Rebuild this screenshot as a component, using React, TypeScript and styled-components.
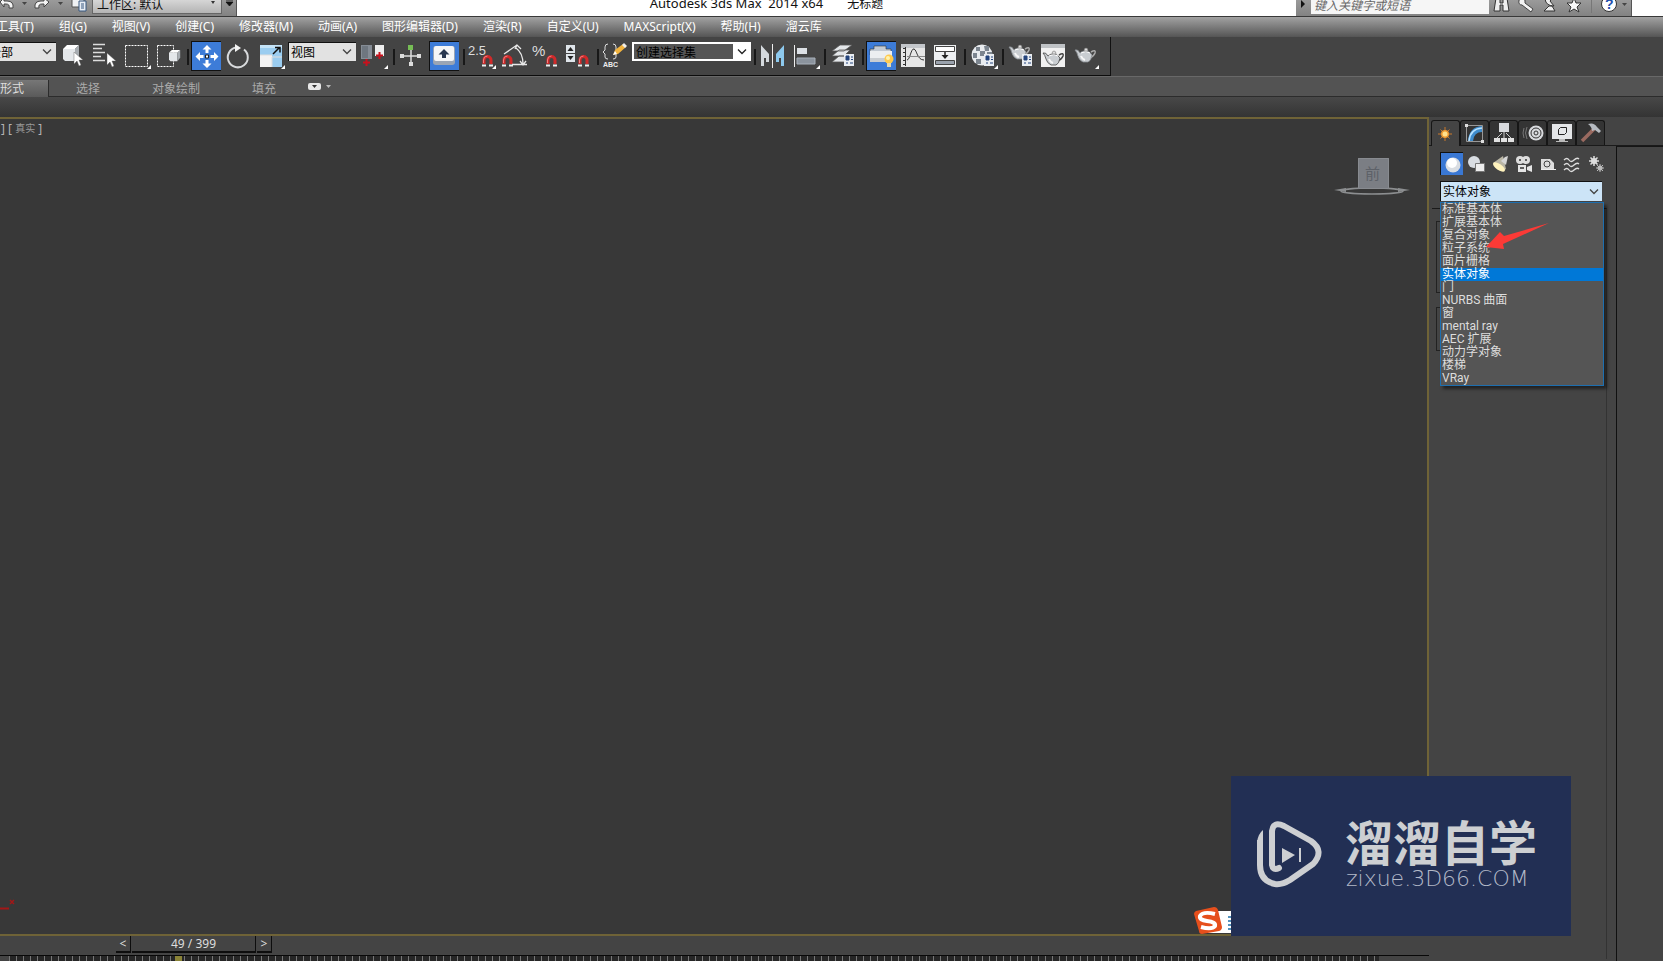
import React from "react";
import styled, { createGlobalStyle, css } from "styled-components";

const Global = createGlobalStyle`
  * { box-sizing: border-box; }
  body { margin: 0; background: #444; overflow: hidden; }
  body, button, input, select {
    font-family: "Noto Sans", "Noto Sans CJK SC", sans-serif;
    font-size: 12px;
  }
  button, select, input { margin: 0; padding: 0; border: 0; border-radius: 0; outline: 0; }
  svg { display: block; flex: none; }
`;

const Page = styled.div`
  position: relative;
  display: flex;
  flex-direction: column;
  height: 100vh;
  overflow: hidden;
  background: #444;
`;

/* Title bar */
const TitleBar = styled.header`
  display: flex;
  justify-content: space-between;
  height: 16px;
  overflow: hidden;
  background: #fff;
  color: #111;
`;
const QuickAccess = styled.div`
  display: flex;
  flex: none;
  width: 237px;
  height: 16px;
  background: linear-gradient(#9a9a9a, #828282);
  border-right: 1px solid #555;
`;
const InfoCenter = styled(QuickAccess)`
  width: 336px;
  margin-right: 31px;
`;
const Title = styled.h1`
  display: flex;
  flex: 1;
  justify-content: center;
  gap: 24px;
  margin: -5px 0 0;
  font-size: 12px;
  font-weight: 400;
  line-height: 17px;
  white-space: pre;
`;
const ProductName = styled.span`
  font-size: 13px;
`;
const PlainButton = styled.button`
  flex: none;
  background: none;
`;
const WorkspaceSelect = styled.select`
  appearance: none;
  width: 130px;
  height: 19px;
  margin: -5px 3px 0 2px;
  padding-left: 4px;
  border: 1px solid #666;
  background: linear-gradient(#e0e0e0, #b4b4b4);
  color: #111;
`;
const SearchInput = styled.input`
  width: 178px;
  height: 18px;
  margin-top: -4px;
  padding-left: 3px;
  background: #f6f6f6;
  font-style: italic;
  &::placeholder { color: #666; opacity: 1; }
`;
const SelectWrap = styled.label`
  position: relative;
  display: flex;
  flex: none;
`;
const Chevron = styled.svg`
  position: absolute;
  right: 3px;
  top: 6px;
  pointer-events: none;
`;
const SmallArrow = styled(Chevron)`
  right: 9px;
  top: 1px;
`;

/* Menu */
const MenuBar = styled.nav`
  display: flex;
  gap: 25px;
  height: 21px;
  padding-bottom: 1px;
  border-top: 1px solid #383838;
  background: linear-gradient(#a2a2a2, #555);
  white-space: nowrap;
`;
const MenuItem = styled.button`
  background: none;
  color: #fff;
  line-height: 18px;
  &:first-child { margin-left: -4px; }
`;

/* Main toolbar */
const Toolbar = styled.div`
  display: flex;
  width: 1111px;
  height: 39px;
  padding-top: 3px;
  border-right: 1px solid #111;
  border-bottom: 1px solid #0c0c0c;
  background: #444;
`;
const Tool = styled.button<{ $active?: boolean }>`
  flex: none;
  width: 32px;
  height: 32px;
  background: none;
  ${(p) =>
    p.$active &&
    css`
      background: linear-gradient(#3d7cd8, #3d7cd8) 2px 2px / 29px 28px no-repeat,
        linear-gradient(#111, #111) 1px 1px / 30px 30px no-repeat;
    `}
`;
const Separator = styled.span`
  flex: none;
  width: 2px;
  height: 16px;
  margin: 9px 1px 0 3px;
  background: #181818;
`;
const ToolSelect = styled.select<{ $width: number; $dark?: boolean }>`
  appearance: none;
  width: ${(p) => p.$width}px;
  height: 19px;
  padding-left: 2px;
  border-top: 1px solid #111;
  border-left: 1px solid #111;
  background: #e2e2e2;
  color: #000;
  ${(p) =>
    p.$dark &&
    css`
      border: 2px solid #fff;
      border-right-width: 18px;
      background: #555;
    `}
`;
const ToolField = styled(SelectWrap)<{ $cut?: boolean; $spaced?: boolean }>`
  height: 20px;
  margin: 2px ${(p) => (p.$spaced ? 2 : 0)}px 0;
  margin-left: ${(p) => (p.$cut ? -14 : p.$spaced ? 2 : 0)}px;
`;

/* Ribbon */
const RibbonTabs = styled.div`
  display: flex;
  height: 21px;
  padding-top: 3px;
  border-top: 1px solid #686868;
  border-bottom: 1px solid #2c2c2c;
  background: #535353;
`;
const RibbonTab = styled.button<{ $width: number; $active?: boolean }>`
  width: ${(p) => p.$width}px;
  height: 17px;
  background: ${(p) => (p.$active ? "linear-gradient(#777, #5a5a5a)" : "none")};
  border-right: ${(p) => (p.$active ? "1px solid #2c2c2c" : "0")};
  color: ${(p) => (p.$active ? "#ddd" : "#aaa")};
  line-height: 15px;
  text-align: ${(p) => (p.$active ? "left" : "center")};
`;
const RibbonPanel = styled.div`
  height: 20px;
  background: linear-gradient(#484848, #343434);
`;

/* Workspace */
const Workspace = styled.main`
  display: flex;
  flex: 1;
  min-height: 0;
`;
const Stage = styled.section`
  display: flex;
  flex: 1;
  flex-direction: column;
  min-width: 0;
`;
const Viewport = styled.div`
  display: flex;
  flex: 1;
  flex-direction: column;
  justify-content: space-between;
  border: 2px solid #6f6337;
  border-left: 0;
  background: #383838;
`;
const ViewportTop = styled.div`
  display: flex;
  justify-content: space-between;
`;
const ViewportLabel = styled.span`
  padding: 1px;
  color: #b4b4b4;
  font-size: 12px;
  line-height: 16px;
  white-space: pre;
  small { font-size: 10px; color: #999; vertical-align: 1px; }
`;
const CubeSlot = styled.div`
  padding: 38px 17px 0 0;
`;
const AxisSlot = styled.div`
  padding-bottom: 21px;
`;
const TimeRow = styled.div`
  display: flex;
  gap: 1px;
  height: 19px;
  padding: 0 0 2px 116px;
`;
const TimeButton = styled.button<{ $width: number }>`
  width: ${(p) => p.$width}px;
  border-right: 1px solid #0d0d0d;
  border-bottom: 2px solid #0d0d0d;
  background: #444;
  color: #ddd;
  line-height: 15px;
`;
const Track = styled.div`
  display: flex;
  height: 6px;
  padding-left: 9px;
  border-top: 1px solid #080808;
`;
const Ticks = styled.div`
  flex: 1;
  padding-left: 166px;
  margin-right: 50px;
  background: repeating-linear-gradient(90deg, #777 0 1px, #262626 1px 7px);
`;
const FrameMark = styled.div`
  width: 7px;
  height: 5px;
  background: #8b8438;
`;

/* Command panel */
const CommandPanel = styled.aside`
  display: flex;
  flex: none;
  flex-direction: column;
  width: 234px;
  padding-top: 3px;
  background: #444;
`;
const PanelTabs = styled.div`
  display: flex;
  height: 26px;
  padding-left: 2px;
  border-bottom: 1px solid #1a1a1a;
`;
const PanelTab = styled.button<{ $active?: boolean }>`
  width: 29px;
  height: ${(p) => (p.$active ? 26 : 25)}px;
  border: 1px solid #161616;
  border-bottom: 0;
  border-radius: 3px 3px 0 0;
  background: ${(p) => (p.$active ? "#444" : "#343434")};
`;
const PanelBody = styled.div`
  display: flex;
  flex: 1;
  padding-left: 3px;
`;
const CreatePane = styled.div`
  flex: 1;
  padding-top: 6px;
`;
const Dock = styled.div`
  width: 47px;
  border-top: 1px solid #161616;
  border-left: 1px solid #101010;
`;
const Categories = styled.div`
  display: flex;
  gap: 1px;
  padding-left: 8px;
`;
const Category = styled.button<{ $active?: boolean }>`
  width: 23px;
  height: 23px;
  background: ${(p) => (p.$active ? "#3a78d4" : "none")};
  border-top: 1px solid ${(p) => (p.$active ? "#111" : "transparent")};
  border-left: 1px solid ${(p) => (p.$active ? "#111" : "transparent")};
`;
const Combo = styled.div`
  position: relative;
  width: 164px;
  margin: 6px 0 0 8px;
`;
const ComboHead = styled.button`
  display: flex;
  align-items: center;
  justify-content: space-between;
  width: 162px;
  height: 20px;
  padding: 0 2px 0 2px;
  border-top: 1px solid #111;
  border-left: 1px solid #111;
  background: #cce4f7;
  color: #000;
  line-height: 18px;
`;
const ComboList = styled.ul`
  position: absolute;
  top: 21px;
  left: 0;
  z-index: 2;
  width: 164px;
  margin: 0;
  padding: 0;
  border: 1px solid #1d6fb0;
  background: #555;
  box-shadow: 3px 3px 3px rgba(0, 0, 0, 0.5);
  font-family: Roboto, "Noto Sans CJK SC", sans-serif;
  list-style: none;
`;
const ComboOption = styled.li<{ $selected?: boolean }>`
  height: 13px;
  padding-left: 1px;
  background: ${(p) => (p.$selected ? "#0078d7" : "none")};
  color: ${(p) => (p.$selected ? "#fff" : "#ddd")};
  line-height: 13px;
  white-space: nowrap;
`;
const Rollouts = styled.div`
  display: flex;
  flex-direction: column;
  gap: 14px;
  margin: 7px 9px 0 0;
  height: calc(100% - 58px);
  border-top: 1px solid #1a1a1a;
  border-right: 1px solid #333;
  padding: 12px 0 0 4px;
`;
const Rollout = styled.div<{ $height: number }>`
  height: ${(p) => p.$height}px;
  margin-right: 4px;
  border: 1px solid #222;
`;
const Pointer = styled.svg`
  position: absolute;
  top: 42px;
  left: 45px;
  z-index: 3;
  pointer-events: none;
`;

/* Overlays */
const Watermark = styled.div`
  position: absolute;
  right: 92px;
  bottom: 25px;
  display: flex;
  gap: 22px;
  width: 340px;
  height: 160px;
  padding: 38px 0 0 26px;
  background: #222f54;
  color: #cdcfd2;
`;
const Brand = styled.div`
  font-family: "Noto Sans CJK SC", sans-serif;
  font-size: 48px;
  font-weight: 700;
  line-height: 52px;
  white-space: nowrap;
`;
const Site = styled.div`
  padding-left: 1px;
  color: #b4bac9;
  font-family: "DejaVu Sans", sans-serif;
  font-size: 22px;
  font-weight: 200;
  line-height: 26px;
`;
const InputMethod = styled.div`
  position: absolute;
  right: 432px;
  bottom: 26px;
`;

type IconProps = { children: React.ReactNode; w?: number; h?: number };
const Icon = ({ children, w = 32, h = 32 }: IconProps) => (
  <svg width={w} height={h} viewBox={`0 0 ${w} ${h}`} fill="none" aria-hidden="true">
    {children}
  </svg>
);
const Corner = ({ x = 27 }: { x?: number }) => <path d={`M${x + 4} 25v4h-4z`} fill="#fff" />;
const Cursor = ({ x, y }: { x: number; y: number }) => (
  <path d={`M${x} ${y}v12l3-3 2 5 2-1-2-5h4z`} fill="#fff" stroke="#555" strokeWidth=".4" />
);
const Cube = ({ x, y, s }: { x: number; y: number; s: number }) => (
  <g transform={`translate(${x} ${y}) scale(${s})`}>
    <path d="M0 4 4 0h12l-4 4z" fill="#fff" />
    <path d="M0 4h12v12H2L0 14z" fill="#e4e7ea" />
    <path d="M12 4l4-4v11l-4 5z" fill="#a8adb2" />
  </g>
);
const Magnet = ({ x }: { x: number }) => (
  <g fill="none">
    <path d={`M${x + 2} 24v-4a3.5 3.5 0 0 1 7 0v4`} stroke="#d02a2a" strokeWidth="3" />
    <path d={`M${x + 1.5} 23v-3a4 4 0 0 1 4-4`} stroke="#f08080" />
    <path d={`M${x} 25.500h4M${x + 7} 25.500h4`} stroke="#eee" strokeWidth="2" />
  </g>
);
const Doc = ({ x, y }: { x: number; y: number }) => (
  <g transform={`translate(${x} ${y})`}>
    <path d="M0 0h10v12H0z" fill="#e9edf2" />
    <path d="M2 2h3v4H2z" fill="#24457c" stroke="#24457c" />
    <path d="M7 3h2M7 5.500h2M2 9h2M6 9h3" stroke="#24457c" />
  </g>
);
const Teapot = ({ x, y, dark }: { x: number; y: number; dark?: boolean }) => (
  <g transform={`translate(${x} ${y})`}>
    <path d="M16 4q5-3 4 1-1 3-5 5" stroke={dark ? "#444" : "#aaa"} strokeWidth="1.500" />
    <path d="M0 2q3-1 5 3 2-2 5-2 5 0 7 4-1 6-4 7H8Q4 12 3 8 2 4 0 2z" fill="#c9cdd1" stroke={dark ? "#444" : "#8b9095"} strokeWidth=".8" />
    <path d="M6 5q5-3 9 0" stroke="#fff" />
    <path d="M9 3q0-3 2-3t2 3z" fill="#ddd" stroke="#777" strokeWidth=".6" />
    <path d="M6 8q1 3 4 4" stroke="#f7f7f7" strokeWidth="2" />
  </g>
);

const icons: Record<string, React.ReactNode> = {
  object: <><Cube x={7} y={5} s={1} /><Cursor x={18} y={12} /></>,
  byName: <><path d="M5 4.500h12M5 8.500h9M5 12.500h12M5 16.500h8M5 20.500h12" stroke="#ddd" strokeWidth="1.500" /><Cursor x={19} y={13} /></>,
  region: <><path d="M5.500 5.500h22v21h-22z" stroke="#fff" strokeDasharray="2 1" /><Corner /></>,
  crossing: <><path d="M5.500 5.500h16v21h-16z" stroke="#fff" strokeDasharray="2 1" /><Cube x={17} y={10} s={0.7} /></>,
  move: <><path d="M17 5l4.500 4.500h-3V13h-3V9.500h-3zM17 28l4.500-4.500h-3V20h-3v3.500h-3zM5.500 16.500L10 12v3h3.500v3H10v3zM28.500 16.500L24 12v3h-3.500v3H24v3z" fill="#fff" /><path d="M15.500 15h3v3h-3z" fill="#fff" stroke="#222" /></>,
  rotate: <><path d="M14 7.500a10 10 0 1 0 8 2" stroke="#d8dadc" strokeWidth="2" /><path d="M13 4l6 4-6 4z" fill="#f4f4f4" /></>,
  scale: <><path d="M6 5h22v22H6z" fill="#9bcdf0" /><path d="M6 5h22v3H6z" fill="#c4e3f8" /><path d="M6 15h12v12H6z" fill="#f3f3f3" /><path d="M18 17h10M18 17v10M6 15h12" stroke="#ddd" /><path d="M19 14l6-6M21 7.500h5v5" stroke="#111" strokeWidth="1.500" /><Corner /></>,
  pivot: <><path d="M3 5h11v14H3z" fill="#858c95" /><path d="M4 6h6v12H4z" fill="#6e767f" /><path d="M17 5h9v11h-9z" fill="#eee" /><path d="M8.500 19v7M5 22.500h7M21.500 12v7M18 15.500h7" stroke="#c9101c" strokeWidth="2" /><Corner x={26} /></>,
  manipulate: <><path d="M15 8v15M7 16h16" stroke="#ddd" strokeWidth="1.500" /><path d="M12 5h5v5h-5z" fill="#76bd55" /><path d="M4 14h4v4H4zM21 14h4v4h-4zM13 22h4v4h-4z" fill="#ddd" /></>,
  keyboard: <><rect x="5" y="6" width="22" height="19" rx="3" fill="#9aa5b4" /><rect x="6" y="6" width="20" height="15" rx="2" fill="#f5f6f7" /><path d="M16 9l5.500 5.500H18V18h-4v-3.500h-3.500z" fill="#27364e" /></>,
  snap: <><text x="2" y="15" fill="#ddd" fontSize="13" fontFamily="Liberation Sans">2.5</text><Magnet x={16} /><Corner x={26} /></>,
  angle: <><Magnet x={4} /><path d="M6 14L19 5M14 24.500h15M18 8q7 5 7 16M17 9l2-4 4 4M22 21l3 4 3-4" stroke="#e8e8e8" strokeWidth="1.300" /></>,
  percent: <><text x="2" y="16" fill="#ddd" fontSize="15" fontFamily="Liberation Sans">%</text><Magnet x={16} /></>,
  spinner: <><path d="M4 5h9v8H4zM4 14h9v8H4z" fill="#dfe5ea" /><path d="M5.500 11h6l-3-4zM5.500 16h6l-3 4z" fill="#222" /><Magnet x={16} /></>,
  sets: <><path d="M8 4q-3 0-3 3v3l-2 2 2 2v3q0 2 3 2M13 4q3 0 3 3v3l2 2-2 2v3q0 2-3 2" stroke="#ddd" /><text x="3" y="27" fill="#eee" fontSize="7" fontWeight="700" fontFamily="Liberation Sans">ABC</text><path d="M13 15l2-5 8-6 3 3-8 7z" fill="#f3b43e" /><path d="M22 5l2-2 3 3-2 2z" fill="#eee" /><path d="M13 15l2-4 2 3z" fill="#fff" /></>,
  mirror: <><path d="M4 5l8 9v8H9v-4H7v8H4z" fill="#d5dade" /><path d="M15.500 4v24" stroke="#eee" /><path d="M27 5l-8 9v8h3v-4h2v8h3z" fill="#8dc9ee" /></>,
  align: <><path d="M5.500 5v22" stroke="#eee" /><path d="M8 8h10v6H8z" fill="#dce0e5" /><path d="M8 18h18v6H8z" fill="#8b939d" stroke="#a8b0ba" /><Corner /></>,
  layers: <><path d="M5 22l7-6h11l-6 6zM5 16l7-6h11l-6 6zM5 11l8-6h12l-8 6z" fill="#e4e7ea" stroke="#555" strokeWidth=".8" /><Doc x={17} y={14} /></>,
  ribbon: <><path d="M9 9V6h12v3h5v6H5V9z" fill="#c3cad3" stroke="#333" strokeWidth=".6" /><path d="M5 11h22v11H5z" fill="#eceef1" /><path d="M5 18h22v4H5z" fill="#c9cdd2" /><circle cx="24" cy="19" r="4.500" fill="#ffc94d" /><circle cx="23" cy="18" r="2" fill="#fff2b0" /><path d="M22 23h4v4h-4z" fill="#e5d9b0" /></>,
  curve: <><path d="M4 4h24v23H4z" fill="#e6e6e6" /><path d="M4 4h24v4H4z" fill="#c3c6ca" /><path d="M8.500 7v19M6 8.500h3M6 12.500h3M6 16.500h3M6 20.500h3M6 24.500h3" stroke="#333" /><path d="M10 20c3 0 4-12 7-11s3 11 10 11" stroke="#333" /><path d="M10 16.500h18" stroke="#888" /></>,
  schematic: <><path d="M5 5h22v22H5z" fill="#eef0f2" /><path d="M6.500 6.500h19v5h-19zM6.500 20.500h19v4h-19z" fill="#fff" stroke="#444" /><path d="M7 21h18v3H7z" fill="#9aa2ad" /><path d="M16 12v4" stroke="#222" strokeWidth="1.500" /><path d="M12.500 15h7L16 19z" fill="#222" /></>,
  material: <><circle cx="15" cy="15" r="10.500" fill="#e9ecef" /><path d="M9 7h4v4H9zM17 6h5v5h-4zM13 11h5v5h-5zM6 13h4v5H6zM20 12h5v5h-5zM9 19h5v5H9z" fill="#7c858f" /><Doc x={17} y={14} /><Corner /></>,
  setup: <><Teapot x={4} y={5} /><Doc x={17} y={14} /></>,
  frame: <><path d="M4 4h24v23H4z" fill="#f1f1f1" /><path d="M4 4h24v4H4z" fill="#bfc2c5" /><Teapot x={6} y={11} dark /></>,
  render: <><Teapot x={6} y={8} /><Corner x={26} /></>,
};

type ToolDef = [string, string, boolean?];
const ToolGroup = ({ tools }: { tools: ToolDef[] }) => (
  <>
    {tools.map(([icon, label, active]) => (
      <Tool key={icon} $active={active} aria-label={label}>
        <Icon>{icons[icon]}</Icon>
      </Tool>
    ))}
  </>
);
const Arrow = ({ dark }: { dark?: boolean }) => (
  <Chevron width="12" height="8" viewBox="0 0 12 8" fill="none">
    <path d="M2 1.500l4 4 4-4" stroke={dark ? "#222" : "#444"} strokeWidth="1.300" />
  </Chevron>
);

const menus = ["工具(T)", "组(G)", "视图(V)", "创建(C)", "修改器(M)", "动画(A)", "图形编辑器(D)", "渲染(R)", "自定义(U)", "MAXScript(X)", "帮助(H)", "溜云库"];
const objectTypes = ["标准基本体", "扩展基本体", "复合对象", "粒子系统", "面片栅格", "实体对象", "门", "NURBS 曲面", "窗", "mental ray", "AEC 扩展", "动力学对象", "楼梯", "VRay"];

const panelTabs: [string, React.ReactNode][] = [
  ["创建", <><path d="M13 5v14M6 12h14M8.500 7.500l9 9M17.500 7.500l-9 9" stroke="#c9782a" /><circle cx="13" cy="12" r="4" fill="#f09a30" /><circle cx="13" cy="12" r="2.500" fill="#ffe08c" /></>],
  ["修改", <><path d="M5.500 4.500h16v16h-16z" stroke="#999" /><path d="M7 20Q8 6 21 5v6q-8 0-9 9z" fill="#3f8ccc" /><path d="M8 20Q9 8 21 7" stroke="#b8e2ff" strokeWidth="1.500" /><path d="M4 3h3v3H4zM20 19h3v3h-3z" fill="#ddd" /></>],
  ["层次", <><path d="M9 2h10v9H9z" fill="#d8dadd" /><path d="M14 11v6M12 12l-5 5M16 12l5 5" stroke="#ccc" /><path d="M4 17h6v4H4zM11 17h6v4h-6zM18 17h6v4h-6z" fill="#e2e2e2" /></>],
  ["运动", <><circle cx="17" cy="12" r="7.500" fill="#d8dadd" /><circle cx="17" cy="12" r="5" stroke="#333" /><circle cx="17" cy="12" r="2" stroke="#333" /><path d="M8 6q-3 6 0 12M5 7q-2 5 0 10" stroke="#777" /></>],
  ["显示", <><path d="M4 3h20v15H4z" fill="#e4e6e8" /><path d="M11 18h6v2h-6zM8 20h12v1H8z" fill="#bbb" /><path d="M10.500 8.500l2-2h6v5l-2 2h-6z" stroke="#222" /></>],
  ["实用程序", <><path d="M5 20L17 8" stroke="#9a6a60" strokeWidth="3.500" /><path d="M11 3q6-2 9 3l4 4-2 2-4-3-3 1q0-4-4-7z" fill="#b5bac0" /></>],
];
const categories: [string, React.ReactNode][] = [
  ["几何体", <><circle cx="12" cy="12" r="7.500" fill="#d9dde2" /><circle cx="11" cy="10" r="5" fill="#fff" /></>],
  ["图形", <><circle cx="9" cy="9" r="6" fill="#d9dde2" /><path d="M10.500 10.500h9v8h-9z" fill="#eee" stroke="#777" /></>],
  ["灯光", <><path d="M4 10L14 3l3 13-3 2z" fill="#b9b5a4" /><ellipse cx="10" cy="14" rx="7" ry="3" transform="rotate(35 10 14)" fill="#fff3bd" /><path d="M12 8l4-4 3-1-2 9z" fill="#d5d5d5" /></>],
  ["摄影机", <><circle cx="7" cy="7" r="4" fill="#ddd" /><circle cx="13" cy="7" r="4" fill="#ddd" /><path d="M5 12h8v7H5zM14 14l5-2v7l-5-2z" fill="#e5e5e5" /><path d="M6 7h2M12 7h2M7 15h4" stroke="#333" strokeWidth="1.500" /></>],
  ["辅助对象", <><path d="M4 6h9l4 4v6H4z" fill="#ddd" /><circle cx="10" cy="11" r="3" stroke="#444" /><path d="M4 16.500h15" stroke="#eee" /></>],
  ["空间扭曲", <path d="M3 7q3-3 5 0t5 0 5-1M3 12q3-3 5 0t5 0 5-1M3 17q3-3 5 0t5 0 5-1" stroke="#ddd" strokeWidth="1.300" />],
  ["系统", <><circle cx="9" cy="8" r="3" fill="#ddd" /><path d="M9 3v10M4 8h10M5.500 4.500l7 7M12.500 4.500l-7 7" stroke="#ddd" strokeWidth="1.500" /><circle cx="15" cy="15" r="2.500" fill="#bbb" /><path d="M15 11v8M11 15h8M12 12l6 6M18 12l-6 6" stroke="#bbb" /></>],
];

export default function App() {
  return (
    <Page>
      <Global />
      <TitleBar>
        <QuickAccess>
          <PlainButton aria-label="撤销"><Icon w={30} h={16}><path d="M0 2l4-4v3h3q7 0 6 7H9q1-4-3-4H4v3z" fill="#f4f4f4" stroke="#444" /><path d="M22 2h5l-2.500 3z" fill="#444" /></Icon></PlainButton>
          <PlainButton aria-label="重做"><Icon w={36} h={16}><path d="M19 2l-5-4v3h-3q-7 0-6 7h4q-1-4 3-4h2v3z" fill="#f4f4f4" stroke="#444" /><path d="M28 2h5l-2.500 3z" fill="#444" /></Icon></PlainButton>
          <PlainButton aria-label="项目"><Icon w={24} h={16}><path d="M6-2h12v9H6z" fill="#f0f2f4" stroke="#555" /><path d="M13 1h7v10h-7z" fill="#e8edf5" stroke="#37577f" /><path d="M15 4h3M15 6h3M15 8h3" stroke="#37577f" /></Icon></PlainButton>
          <SelectWrap>
            <WorkspaceSelect aria-label="工作区" defaultValue="d"><option value="d">工作区: 默认</option></WorkspaceSelect>
            <SmallArrow width="6" height="4" viewBox="0 0 6 4"><path d="M1 0h4L3 3z" fill="#333" /></SmallArrow>
          </SelectWrap>
          <PlainButton aria-label="自定义快速访问"><Icon w={10} h={16}><path d="M1 0h7M1 2h7l-3.500 4z" fill="#111" stroke="#111" strokeWidth=".8" /></Icon></PlainButton>
        </QuickAccess>
        <Title><ProductName>Autodesk 3ds Max  2014 x64</ProductName><span>无标题</span></Title>
        <InfoCenter>
          <PlainButton aria-label="展开"><Icon w={15} h={16}><path d="M5 0l4 4-4 4z" fill="#111" /></Icon></PlainButton>
          <SearchInput aria-label="搜索" placeholder="键入关键字或短语" />
          <PlainButton aria-label="查找"><Icon w={25} h={16}><path d="M7-2h4v5h3v-5h4l2 13h-6V5h-3v6H5z" fill="#eee" stroke="#333" /></Icon></PlainButton>
          <PlainButton aria-label="许可"><Icon w={24} h={16}><path d="M5 0q3-3 6 0v3l8 6-2 3-9-7Q4 5 5 0z" fill="#f3f3f3" stroke="#444" /></Icon></PlainButton>
          <PlainButton aria-label="通信中心"><Icon w={24} h={16}><path d="M7-1q1 7 9 7L12 1l4-4M11 6l-5 5h11l-3-5z" fill="#eee" stroke="#333" /></Icon></PlainButton>
          <PlainButton aria-label="收藏夹"><Icon w={24} h={16}><path d="M12-2l2 5h5l-4 4 2 5-5-3-5 3 2-5-4-4h5z" fill="#f8f8f8" stroke="#333" /></Icon></PlainButton>
          <PlainButton aria-label="帮助"><Icon w={42} h={16}><path d="M5.500 0v13" stroke="#777" /><circle cx="23" cy="4" r="7.500" fill="#fff" stroke="#333" /><text x="19" y="9" fontSize="14" fontWeight="700" fill="#1e4fae" fontFamily="Liberation Sans">?</text><path d="M36 3h5l-2.500 3z" fill="#444" /></Icon></PlainButton>
        </InfoCenter>
      </TitleBar>

      <MenuBar>{menus.map((m) => <MenuItem key={m}>{m}</MenuItem>)}</MenuBar>

      <Toolbar>
        <ToolField $cut>
          <ToolSelect $width={70} aria-label="选择过滤器"><option>全部</option></ToolSelect>
          <Arrow />
        </ToolField>
        <ToolGroup tools={[["object", "选择对象"], ["byName", "按名称选择"], ["region", "矩形选择区域"], ["crossing", "窗口/交叉"]]} />
        <Separator />
        <ToolGroup tools={[["move", "移动", true], ["rotate", "旋转"], ["scale", "缩放"]]} />
        <ToolField $spaced>
          <ToolSelect $width={68} aria-label="参考坐标系"><option>视图</option></ToolSelect>
          <Arrow />
        </ToolField>
        <ToolGroup tools={[["pivot", "使用轴点中心"]]} />
        <Separator />
        <ToolGroup tools={[["manipulate", "选择并操纵"], ["keyboard", "键盘快捷键覆盖", true]]} />
        <Separator />
        <ToolGroup tools={[["snap", "捕捉开关"], ["angle", "角度捕捉"], ["percent", "百分比捕捉"], ["spinner", "微调器捕捉"]]} />
        <Separator />
        <ToolGroup tools={[["sets", "编辑命名选择集"]]} />
        <ToolField>
          <ToolSelect $width={119} $dark aria-label="命名选择集"><option>创建选择集</option></ToolSelect>
          <Arrow dark />
        </ToolField>
        <Separator />
        <ToolGroup tools={[["mirror", "镜像"], ["align", "对齐"]]} />
        <Separator />
        <ToolGroup tools={[["layers", "层管理器"]]} />
        <Separator />
        <ToolGroup tools={[["ribbon", "功能区", true], ["curve", "曲线编辑器"], ["schematic", "图解视图"]]} />
        <Separator />
        <ToolGroup tools={[["material", "材质编辑器"]]} />
        <Separator />
        <ToolGroup tools={[["setup", "渲染设置"], ["frame", "渲染帧窗口"], ["render", "渲染产品"]]} />
      </Toolbar>

      <RibbonTabs>
        <RibbonTab $width={49} $active>形式</RibbonTab>
        <RibbonTab $width={78}>选择</RibbonTab>
        <RibbonTab $width={98}>对象绘制</RibbonTab>
        <RibbonTab $width={78}>填充</RibbonTab>
        <PlainButton aria-label="功能区显示"><Icon w={32} h={16}><rect x="5" y="3" width="13" height="7" rx="2" fill="#e8e8e8" /><path d="M9 5h5l-2.500 3z" fill="#333" /><path d="M23 5h5l-2.500 3z" fill="#bbb" /></Icon></PlainButton>
      </RibbonTabs>
      <RibbonPanel />

      <Workspace>
        <Stage>
          <Viewport>
            <ViewportTop>
              <ViewportLabel>] [ <small>真实</small> ]</ViewportLabel>
              <CubeSlot>
                <Icon w={76} h={40}>
                  <ellipse cx="38" cy="34" rx="31" ry="3" stroke="#8c8e90" strokeWidth="1.500" />
                  <path d="M0 33l12-2v4zM76 33l-12-2v4z" fill="#8c8e90" />
                  <path d="M24 1h31v31H24z" fill="#7b7e84" />
                  <path d="M24.500 1.500h30v30h-30z" stroke="#888b90" />
                  <text x="31" y="22" fontSize="15" fill="#5d6168" fontFamily="Noto Sans CJK SC">前</text>
                </Icon>
              </CubeSlot>
            </ViewportTop>
            <AxisSlot>
              <Icon w={16} h={14}><path d="M0 9.500h9" stroke="#a31717" strokeWidth="2" /><path d="M10 1l4 4M14 1l-4 4" stroke="#a31717" strokeWidth="1.500" /></Icon>
            </AxisSlot>
          </Viewport>
          <TimeRow>
            <TimeButton $width={15} aria-label="上一帧">&lt;</TimeButton>
            <TimeButton $width={124}>49 / 399</TimeButton>
            <TimeButton $width={15} aria-label="下一帧">&gt;</TimeButton>
          </TimeRow>
          <Track><Ticks><FrameMark /></Ticks></Track>
        </Stage>

        <CommandPanel>
          <PanelTabs>
            {panelTabs.map(([label, art], i) => (
              <PanelTab key={label} $active={i === 0} aria-label={label}><Icon w={27} h={24}>{art}</Icon></PanelTab>
            ))}
          </PanelTabs>
          <PanelBody>
            <CreatePane>
              <Categories>
                {categories.map(([label, art], i) => (
                  <Category key={label} $active={i === 0} aria-label={label}><Icon w={22} h={22}>{art}</Icon></Category>
                ))}
              </Categories>
              <Combo>
                <ComboHead aria-haspopup="listbox" aria-expanded="true">
                  实体对象
                  <Icon w={12} h={8}><path d="M2 1.500l4 4 4-4" stroke="#444" strokeWidth="1.300" /></Icon>
                </ComboHead>
                <ComboList role="listbox" aria-label="对象类型">
                  {objectTypes.map((t) => (
                    <ComboOption key={t} role="option" $selected={t === "实体对象"} aria-selected={t === "实体对象"}>{t}</ComboOption>
                  ))}
                </ComboList>
                <Pointer width="66" height="28" viewBox="0 0 66 28">
                  <path d="M64 0L19 13 15 9 1 24 19 26 18 21z" fill="#fb3a36" />
                </Pointer>
              </Combo>
              <Rollouts>
                <Rollout $height={72} />
                <Rollout $height={44} />
              </Rollouts>
            </CreatePane>
            <Dock />
          </PanelBody>
        </CommandPanel>
      </Workspace>

      <InputMethod>
        <Icon w={38} h={30}>
          <path d="M10 6h28v22H10z" fill="#fff" />
          <path d="M35 12h3M35 16h3M35 20h3M35 24h3" stroke="#1d6fa8" strokeWidth="1.500" />
          <path d="M3 6l18-4q3 0 4 3l4 17q0 3-3 4L9 29q-3 0-3-3L1 9q0-2 2-3z" fill="#e64f1c" />
          <path d="M22 9Q10 6 7 11q-1 4 7 5 9 1 8 5-3 4-14 1" stroke="#fff" strokeWidth="4" />
        </Icon>
      </InputMethod>
      <Watermark>
        <Icon w={66} h={80}>
          <path d="M15 49V17q1-10 12-5l27 15q14 10 2 23L33 66q-8 5-15 4Q3 67 3 51V26" stroke="#cdcfd2" strokeWidth="6" strokeLinejoin="round" />
          <path d="M0 28q1-8 6-12v14H0z" fill="#cdcfd2" />
          <path d="M15 46v5q1 6 7 3" stroke="#cdcfd2" strokeWidth="6" strokeLinecap="round" />
          <path d="M25 34l13 7-13 8z" fill="#cdcfd2" />
          <path d="M43 34v14" stroke="#cdcfd2" strokeWidth="2" />
        </Icon>
        <div>
          <Brand>溜溜自学</Brand>
          <Site>zixue.3D66.COM</Site>
        </div>
      </Watermark>
    </Page>
  );
}
